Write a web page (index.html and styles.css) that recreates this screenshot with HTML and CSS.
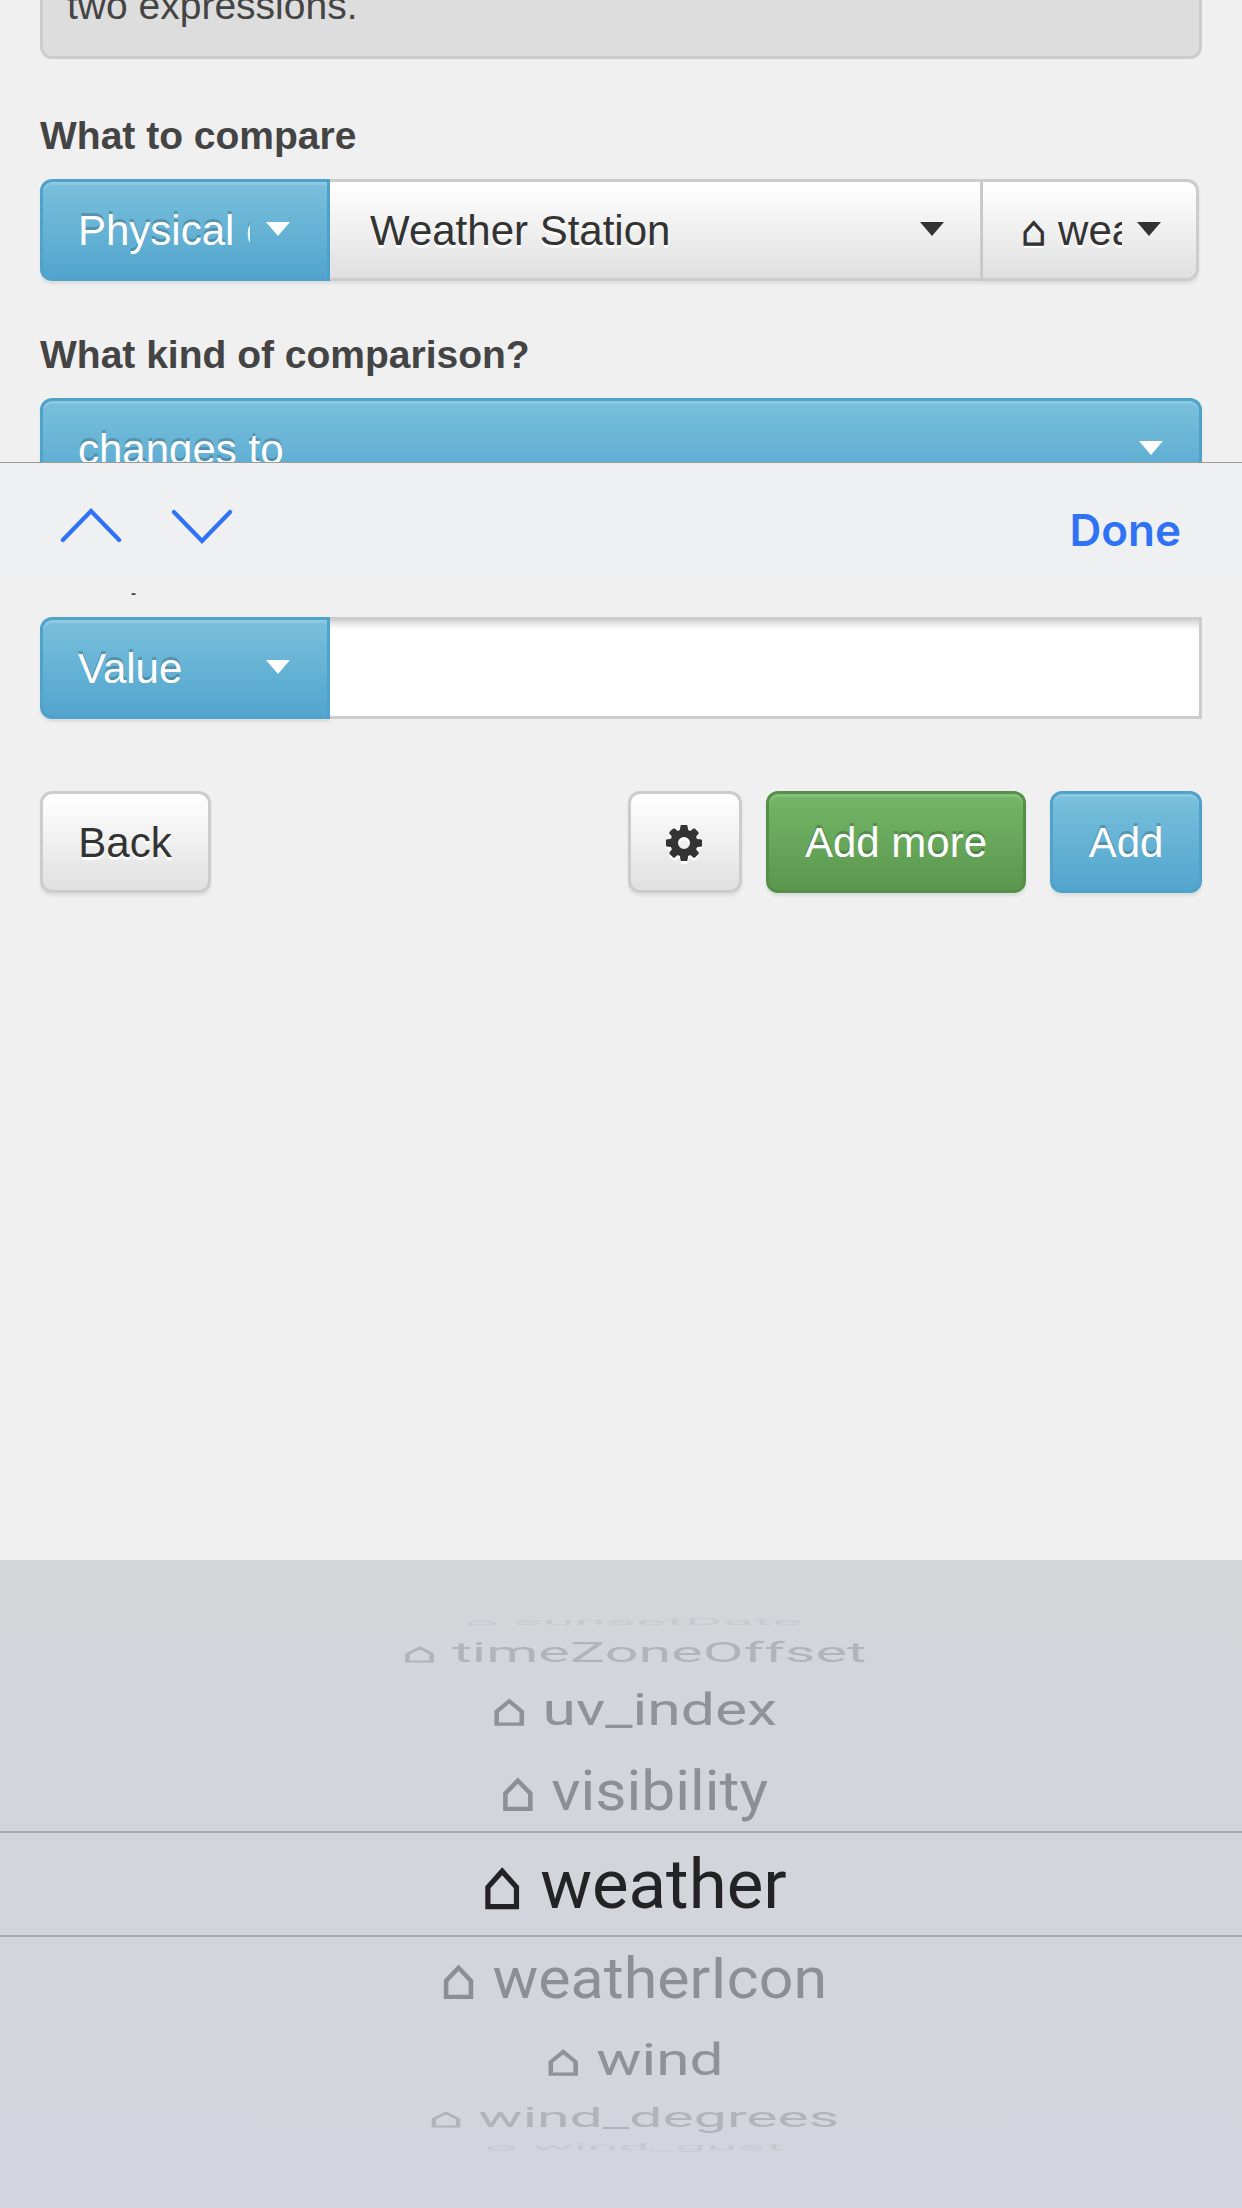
FILE: index.html
```html
<!DOCTYPE html>
<html lang="en">
<head>
<meta charset="utf-8">
<title>Compare</title>
<link rel="stylesheet" href="styles.css">
</head>
<body>
<main class="page">
  <div class="well">two expressions.</div>

  <div class="label">What to compare</div>
  <div class="group group-narrow">
    <div class="btn blue seg-first"><span class="btn-text">Physical device</span><i class="caret caret-light"></i></div>
    <div class="btn white seg-mid"><span class="btn-text">Weather Station</span><i class="caret caret-dark"></i></div>
    <div class="btn white seg-last"><span class="btn-text"><span class="house">⌂</span> weather</span><i class="caret caret-dark"></i></div>
  </div>

  <div class="label">What kind of comparison?</div>
  <div class="btn blue full"><span class="btn-text">changes to</span><i class="caret caret-light"></i></div>

  <div class="tick">-</div>

  <div class="group">
    <div class="btn blue seg-first"><span class="btn-text">Value</span><i class="caret caret-light"></i></div>
    <div class="value-input"></div>
  </div>

  <div class="actions">
    <div class="btn white action back">Back</div>
    <div class="actions-right">
      <div class="btn white action gear">
        <svg class="gear-icon" viewBox="0 0 1536 1536"><path d="M1024 768q0-106-75-181t-181-75-181 75-75 181 75 181 181 75 181-75 75-181zm512-109v222q0 12-8 23t-20 13l-185 28q-19 54-39 91 35 50 107 138 10 12 10 25t-9 23q-27 37-99 108t-94 71q-12 0-26-9l-138-108q-44 23-91 38-16 136-29 186-7 28-36 28h-222q-14 0-24.5-8.5t-11.5-21.5l-28-184q-49-16-90-37l-141 107q-10 9-25 9-14 0-25-11-126-114-165-168-7-10-7-23 0-12 8-23 15-21 51-66.5t54-70.5q-27-50-41-99l-183-27q-13-2-21-12.5t-8-23.5v-222q0-12 8-23t19-13l186-28q14-46 39-92-40-57-107-138-10-12-10-24 0-10 9-23 26-36 98.5-107.5t94.5-71.5q13 0 26 10l138 107q44-23 91-38 16-136 29-186 7-28 36-28h222q14 0 24.5 8.5t11.5 21.5l28 184q49 16 90 37l142-107q9-9 24-9 13 0 25 10 129 119 165 170 7 8 7 22 0 12-8 23-15 21-51 66.5t-54 70.5q26 50 41 98l183 28q13 2 21 12.5t8 23.5z"/></svg>
      </div>
      <div class="btn green action more">Add more</div>
      <div class="btn blue action add">Add</div>
    </div>
  </div>
</main>

<div class="toolbar">
  <div class="chevrons">
    <svg class="chev" viewBox="0 0 64 36"><path d="M2 33 L32 2 L62 33"/></svg>
    <svg class="chev" viewBox="0 0 64 36"><path d="M2 3 L32 34 L62 3"/></svg>
  </div>
  <div class="done">Done</div>
</div>

<div class="picker">
  <div class="row r1"><span class="item"><span class="house">⌂</span> sunsetDate</span></div>
  <div class="row r2"><span class="item"><span class="house">⌂</span> timeZoneOffset</span></div>
  <div class="row r3"><span class="item"><span class="house">⌂</span> uv_index</span></div>
  <div class="row r4"><span class="item"><span class="house">⌂</span> visibility</span></div>
  <div class="row r5"><span class="item"><span class="house">⌂</span> weather</span></div>
  <div class="row r6"><span class="item"><span class="house">⌂</span> weatherIcon</span></div>
  <div class="row r7"><span class="item"><span class="house">⌂</span> wind</span></div>
  <div class="row r8"><span class="item"><span class="house">⌂</span> wind_degrees</span></div>
  <div class="row r9"><span class="item"><span class="house">⌂</span> wind_gust</span></div>
</div>
</body>
</html>
```

FILE: styles.css
```css
* { box-sizing: border-box; }
html, body { margin: 0; padding: 0; }
body {
  width: 1242px;
  height: 2208px;
  position: relative;
  overflow: hidden;
  background: #f0f0f0;
  font-family: "Liberation Sans", Arial, sans-serif;
  color: #333;
}
.page { padding: 0 40px; }

.well {
  margin-top: -100px;
  height: 159px;
  padding: 80px 24px 0;
  background: #ddd;
  border: 3px solid #ccc;
  border-radius: 12px;
  font-size: 39px;
  line-height: 45px;
  color: #444;
}

.label {
  margin-top: 54px;
  margin-bottom: 21px;
  font-size: 39px;
  font-weight: bold;
  line-height: 45px;
  color: #444;
}
.group + .label { margin-top: 51px; }

.group { display: flex; height: 102px; }
.group-narrow { width: 1159px; }

.btn {
  display: flex;
  align-items: center;
  height: 102px;
  padding: 2px 36px 0 35px;
  border: 3px solid;
  font-size: 42px;
  white-space: nowrap;
}
.btn-text { flex: 1; min-width: 0; overflow: hidden; white-space: nowrap; }

.blue {
  color: #fff;
  background: linear-gradient(#79c0dc, #52a5ce);
  border-color: #4fa3cb;
  box-shadow: inset 0 3px 0 rgba(255,255,255,.15), 0 3px 3px rgba(0,0,0,.08);
  text-shadow: 0 -3px 0 rgba(0,0,0,.2);
}
.white {
  color: #333;
  background: linear-gradient(#fff, #e0e0e0);
  border-color: #ccc;
  box-shadow: 0 3px 3px rgba(0,0,0,.08);
  text-shadow: 0 3px 0 #fff;
}
.green {
  color: #fff;
  background: linear-gradient(#73b767, #5b964f);
  border-color: #558f4a;
  box-shadow: inset 0 3px 0 rgba(255,255,255,.15), 0 3px 3px rgba(0,0,0,.08);
  text-shadow: 0 -3px 0 rgba(0,0,0,.2);
}

.seg-first { width: 290px; flex: none; border-radius: 12px 0 0 12px; padding-right: 37px; gap: 16px; }
.seg-mid { width: 653px; flex: none; border-left: 0; padding-left: 40px; }
.seg-last { width: 216px; flex: none; border-left: 0; border-radius: 0 12px 12px 0; padding: 2px 35px 0 38px; gap: 15px; }
.full { border-radius: 12px; }

.caret {
  flex: none;
  width: 0;
  height: 0;
  border-left: 12px solid transparent;
  border-right: 12px solid transparent;
  margin-bottom: 4px;
}
.caret-light { border-top: 14px solid #fff; }
.caret-dark { border-top: 14px solid #333; }

.tick {
  height: 117px;
  padding: 86px 0 0 91px;
  font-size: 15px;
  font-weight: bold;
  line-height: 14px;
  color: #444;
}

.value-input {
  flex: 1;
  height: 102px;
  background: #fff;
  border: 3px solid #ccc;
  border-left: 0;
  box-shadow: inset 0 9px 9px -6px rgba(0,0,0,.22);
}

.actions { display: flex; justify-content: space-between; margin-top: 72px; }
.actions-right { display: flex; gap: 24px; }
.action { justify-content: center; border-radius: 12px; padding: 2px 0 0; }
.back { width: 171px; padding-right: 1px; }
.gear { width: 114px; padding-right: 2px; }
.more { width: 260px; }
.add { width: 152px; }
.gear-icon { width: 36px; height: 36px; fill: #333; filter: drop-shadow(0 3px 0 #fff); }

.toolbar {
  position: absolute;
  left: 0;
  top: 462px;
  width: 100%;
  height: 130px;
  display: flex;
  justify-content: space-between;
  padding: 46px 61px 0 61px;
  background: linear-gradient(#eff0f2, #eff0f2 60%, #f0f0f0);
  border-top: 1.5px solid #9a9a9a;
}
.chevrons { display: flex; gap: 51px; }
.chev { width: 60px; height: 34px; overflow: visible; }
.chev path { fill: none; stroke: #2f72f6; stroke-width: 4.5; stroke-linecap: round; stroke-linejoin: miter; }
.done {
  margin-top: -1px;
  font-family: Inter, "Liberation Sans", sans-serif;
  font-size: 44px;
  font-weight: 600;
  line-height: 44px;
  color: #2f72f6;
}

.picker {
  position: absolute;
  left: 0;
  top: 1560px;
  width: 100%;
  height: 648px;
  padding: 50px 0 0 26px;
  background: linear-gradient(#d3d5d9, #d2d5dd);
  font-family: Roboto, sans-serif;
  font-size: 69px;
  overflow: hidden;
}
.row { display: flex; align-items: center; justify-content: center; overflow: hidden; white-space: nowrap; }
.item { display: inline-block; }
.house { font-family: "Liberation Sans", "DejaVu Sans", sans-serif; -webkit-text-stroke: 1.5px currentColor; }
.picker .house { -webkit-text-stroke: 2.5px currentColor; }

.r1 { height: 24px; color: #c6c9ce; }
.r2 { height: 36px; color: #b2b4b9; }
.r3 { height: 78px; color: #909297; }
.r4 { height: 83px; color: #8e8f94; }
.r5 { height: 106px; color: #232326; margin-left: -26px; padding-left: 26px; border-top: 2px solid #a9abb0; border-bottom: 2px solid #a9abb0; }
.r6 { height: 87px; color: #8e8f94; }
.r7 { height: 72px; color: #909297; }
.r8 { height: 42px; color: #b2b4b9; }
.r9 { height: 16px; color: #c6c9ce; }

.r1 .item { transform: scale(.83, .12); }
.r2 .item { transform: scale(.86, .39); }
.r3 .item { transform: scale(.878, .65); }
.r4 .item { transform: translateY(2px) scale(.878, .8); }
.r6 .item { transform: translateY(-1.5px) scale(.883, .82); }
.r7 .item { transform: scale(.874, .63); }
.r8 .item { transform: scale(.854, .39); }
.r9 .item { transform: scale(.81, .13); }
```
